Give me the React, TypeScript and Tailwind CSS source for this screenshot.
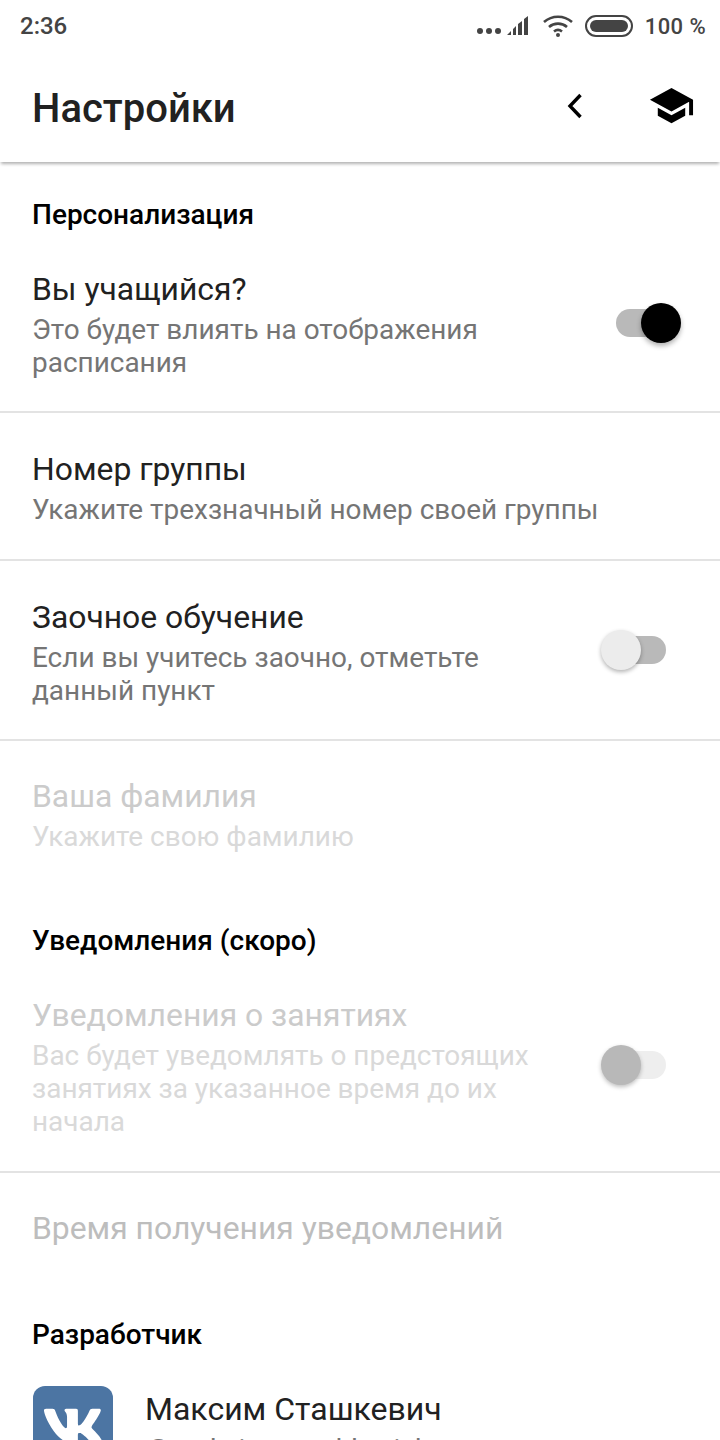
import React from "react";
import { FaVk } from "react-icons/fa";

function Toggle({ on, disabled, className }: { on?: boolean; disabled?: boolean; className?: string }) {
  return (
    <div className={"relative w-[80px] h-[40px] shrink-0 " + (className || "")}>
      <div
        className={
          "absolute left-[15px] top-[6px] w-[50px] h-[28px] rounded-full " +
          (disabled ? "bg-[#eeeeee]" : "bg-[#b9b9b9]")
        }
      />
      {on ? (
        <div className="absolute right-0 top-0 w-[40px] h-[40px] rounded-full bg-black shadow-[0_3px_5px_rgba(0,0,0,0.3)]" />
      ) : disabled ? (
        <div className="absolute left-0 top-0 w-[40px] h-[40px] rounded-full bg-[#b8b8b8] shadow-[0_2px_4px_rgba(0,0,0,0.25)]" />
      ) : (
        <div className="absolute left-0 top-0 w-[40px] h-[40px] rounded-full bg-[#ececec] shadow-[0_2px_4px_rgba(0,0,0,0.3)]" />
      )}
    </div>
  );
}

function Row({
  title,
  sub,
  toggle,
  disabled,
  titleColor,
  className,
}: {
  title: string;
  sub?: string[];
  toggle?: React.ReactNode;
  disabled?: boolean;
  titleColor?: string;
  className?: string;
}) {
  return (
    <div className={"flex items-center pl-[32px] pr-[39px] " + (className || "")}>
      <div className="flex-1">
        <div className={"text-[31.85px] leading-[40px] " + (titleColor || (disabled ? "text-[#cbcbcb]" : "text-[#212121]"))}>{title}</div>
        {sub && (
          <div className={"mt-[4px] text-[27.95px] leading-[33px] " + (disabled ? "text-[#d9d9d9]" : "text-[#757575]")}>
            {sub.map((s) => (
              <div key={s}>{s}</div>
            ))}
          </div>
        )}
      </div>
      {toggle}
    </div>
  );
}

function Heading({ children, className }: { children: React.ReactNode; className?: string }) {
  return <div className={"pl-[32px] text-[28px] leading-[30px] font-medium text-black " + (className || "")}>{children}</div>;
}

function StatusBar() {
  return (
    <div className="h-[52px] flex items-center justify-between pl-[20px] pr-[14px] text-[#444444]">
      <span className="text-[24px] font-medium">2:36</span>
      <div className="flex items-center">
        <div className="flex gap-[3px] mt-[10px]">
          <span className="w-[6px] h-[6px] rounded-full bg-[#444444]" />
          <span className="w-[6px] h-[6px] rounded-full bg-[#444444]" />
          <span className="w-[6px] h-[6px] rounded-full bg-[#444444]" />
        </div>
        <svg width="24" height="22" viewBox="0 0 24 22" className="ml-[5px]" fill="#444444">
          <path d="M1 20l4-4v4zM7 14l3-3v9H7zM12 9l4-3v14h-4zM18 4l4-3v19h-4z" />
        </svg>
        <svg width="32" height="24" viewBox="0 0 32 24" className="ml-[12px]" fill="none" stroke="#444444" strokeWidth="2.6">
          <path d="M2 8c8-7 20-7 28 0" />
          <path d="M7 13c5-4.500 13-4.500 18 0" />
          <path d="M12 17.500c2.500-2 5.500-2 8 0" />
          <circle cx="16" cy="21" r="2" fill="#444444" stroke="none" />
        </svg>
        <div className="ml-[11px] w-[48px] h-[22px] rounded-full border-[2px] border-[#444444] p-[3px]">
          <div className="w-full h-full rounded-full bg-[#444444]" />
        </div>
        <span className="ml-[12px] text-[22px] font-medium tracking-[0.4px]">100 %</span>
      </div>
    </div>
  );
}

export default function App() {
  return (
    <div className="w-[720px] h-[1440px] overflow-hidden bg-white font-['Roboto',sans-serif]">
      <StatusBar />
      <header className="h-[110px] flex items-center pl-[32px] bg-white shadow-[0_3px_3px_-1px_rgba(0,0,0,0.3)] relative">
        <h1 className="flex-1 text-[40px] font-medium text-[#212121] mt-[3px]">Настройки</h1>
        <svg width="16" height="26" viewBox="0 0 16 26" className="-mt-[3px]" fill="none" stroke="black" strokeWidth="3.400">
          <path d="M13.500 2L3 13l10.500 11" />
        </svg>
        <svg width="47" height="47" viewBox="0 0 24 24" fill="black" className="ml-[65px] mr-[25px] -mt-[3px]">
          <path d="M5 13.180v4L12 21l7-3.820v-4L12 17l-7-3.820zM12 3L1 9l11 6 9-4.910V17h2V9L12 3z" />
        </svg>
      </header>

      <Heading className="pt-[38px]">Персонализация</Heading>
      <Row
        className="pt-[39px] pb-[32px] border-b-[2px] border-[#e3e3e3]"
        title="Вы учащийся?"
        sub={["Это будет влиять на отображения", "расписания"]}
        toggle={<Toggle on className="-mt-[2px]" />}
      />
      <Row
        className="pt-[36px] pb-[33px] border-b-[2px] border-[#e3e3e3]"
        title="Номер группы"
        sub={["Укажите трехзначный номер своей группы"]}
      />
      <Row
        className="pt-[36px] pb-[32px] border-b-[2px] border-[#e3e3e3]"
        title="Заочное обучение"
        sub={["Если вы учитесь заочно, отметьте", "данный пункт"]}
        toggle={<Toggle className="-mt-[4px]" />}
      />
      <Row className="pt-[35px]" title="Ваша фамилия" sub={["Укажите свою фамилию"]} disabled />

      <Heading className="pt-[73px]">Уведомления (скоро)</Heading>
      <Row
        className="pt-[39px] pb-[33px] border-b-[2px] border-[#e3e3e3]"
        title="Уведомления о занятиях"
        sub={["Вас будет уведомлять о предстоящих", "занятиях за указанное время до их", "начала"]}
        toggle={<Toggle disabled className="-mt-[4px]" />}
        disabled
      />
      <Row className="pt-[35px]" title="Время получения уведомлений" titleColor="text-[#bdbdbd]" />

      <Heading className="pt-[72px]">Разработчик</Heading>
      <div className="flex pl-[33px] pt-[36px] gap-[32px]">
        <div className="w-[80px] h-[80px] rounded-[12px] bg-[#4c75a3] flex items-center justify-center shrink-0">
          <FaVk className="text-white w-[62px] h-[62px]" />
        </div>
        <div>
          <div className="text-[32px] leading-[46px] text-[#212121]">Максим Сташкевич</div>
          <div className="mt-[1px] text-[28px] leading-[33px] text-[#757575]">@maksim_stashkevich</div>
        </div>
      </div>
    </div>
  );
}
